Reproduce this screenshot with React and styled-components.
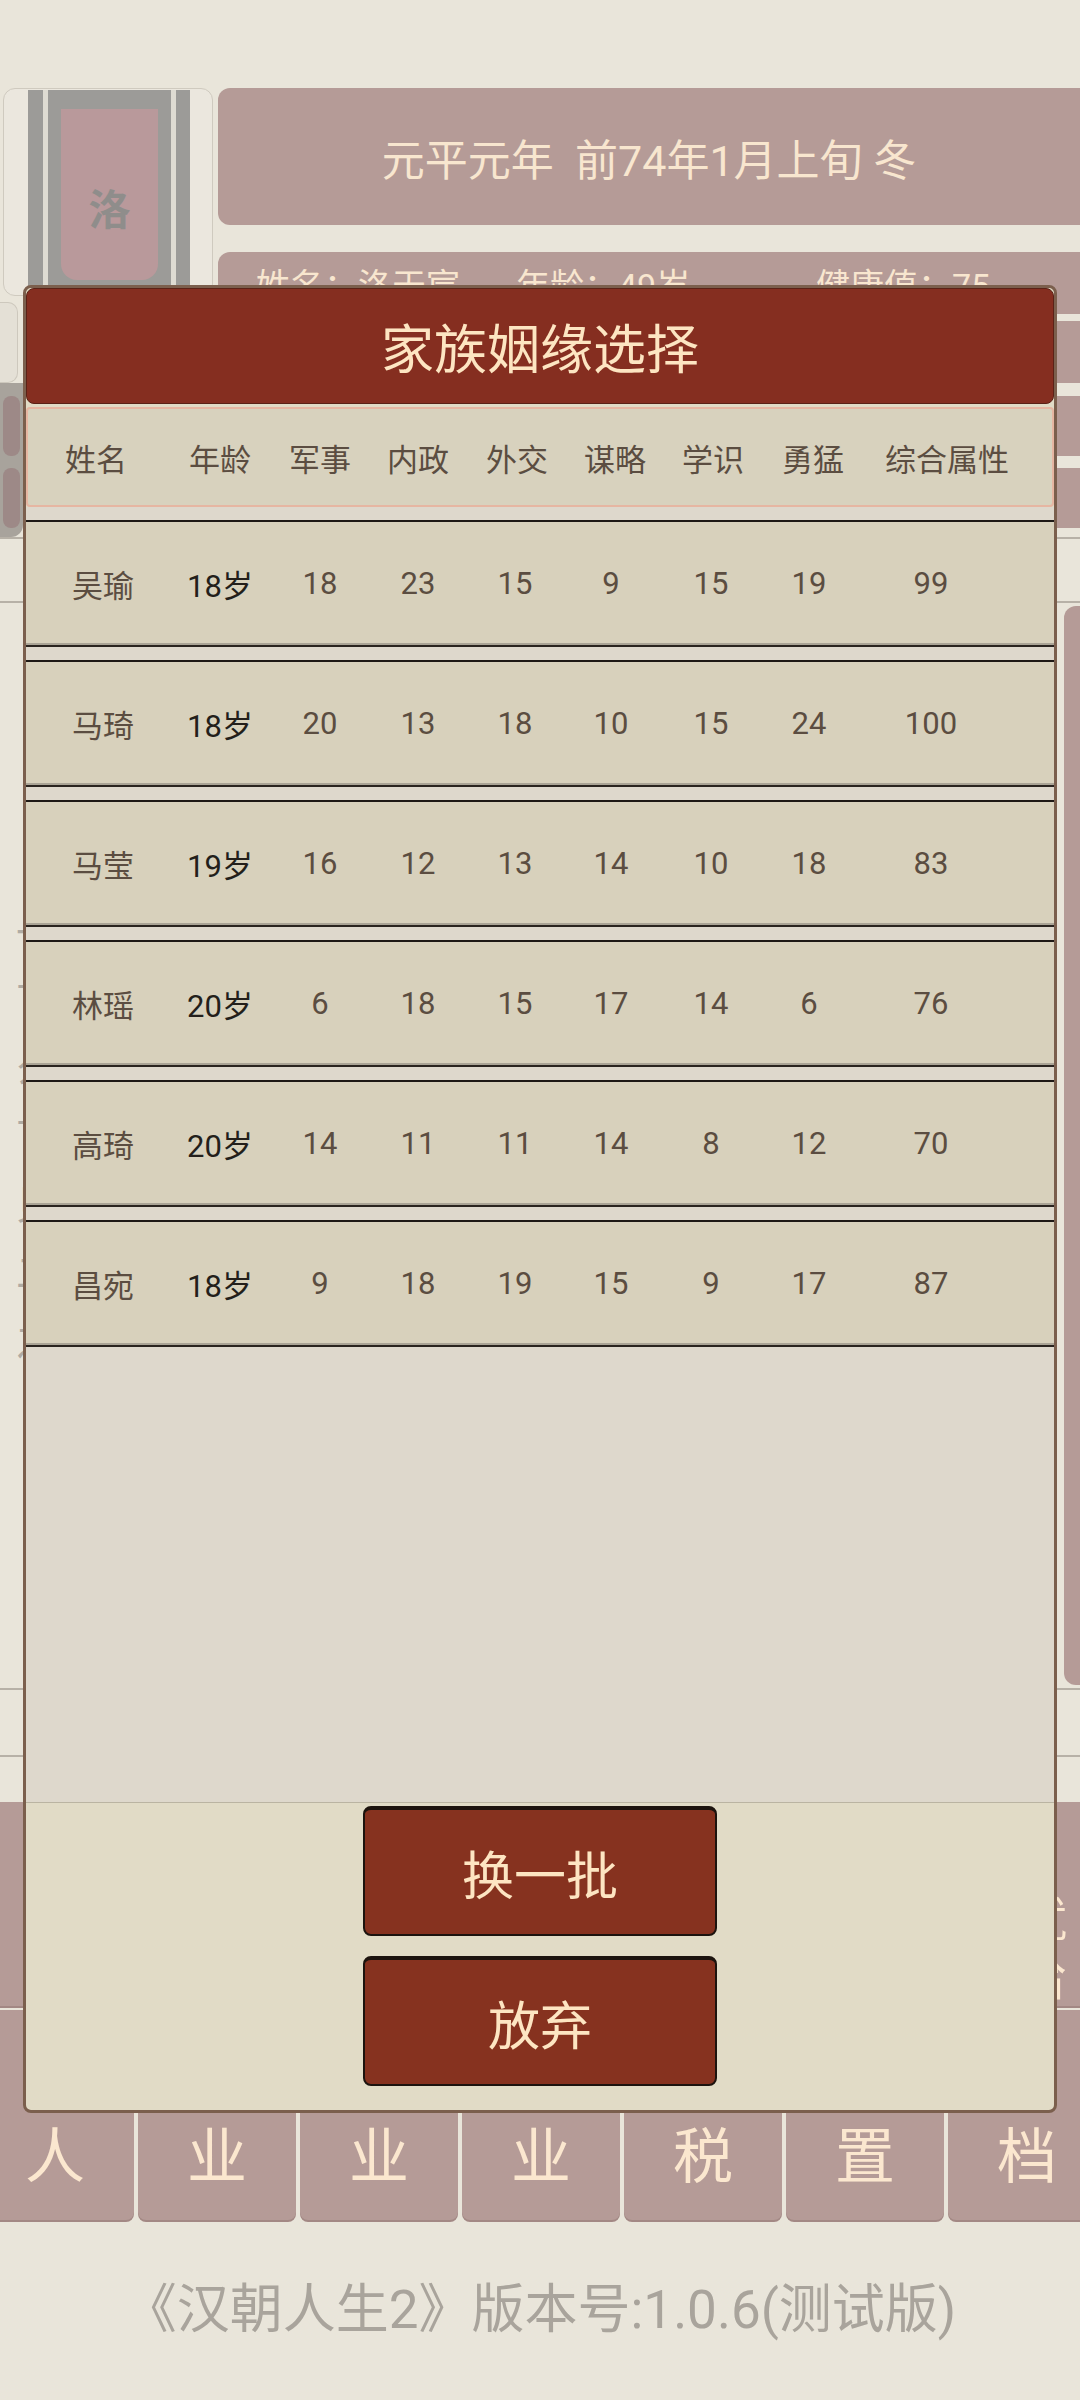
import React from 'react';
import styled, { createGlobalStyle } from 'styled-components';

const GlobalStyle = createGlobalStyle`
  html, body {
    margin: 0;
    padding: 0;
  }
  body {
    background: #e9e5da;
    font-family: Roboto, "Noto Sans CJK SC", sans-serif;
  }
`;

// column centres measured from the screen, turned into grid tracks
// so that each track is centred on its column
const toTemplate = (centers, firstHalf) => {
  let half = firstHalf;
  const widths = [half * 2];
  for (let i = 1; i < centers.length; i++) {
    half = centers[i] - centers[i - 1] - half;
    widths.push(half * 2);
  }
  return {
    offset: centers[0] - firstHalf,
    cols: widths.map(w => `${w}px`).join(' '),
  };
};

const HEAD_COLS = toTemplate([68, 192, 292, 390, 489, 587, 685, 785, 919], 60);
const ROW_COLS = toTemplate([77, 194, 294, 392, 489, 585, 685, 783, 905], 58);

const PINK = '#b59b97';
const CREAM = '#f8e6cf';

const StPage = styled.div`
  position: relative;
  width: 1080px;
  height: 2400px;
  overflow: hidden;
  background: #e9e5da;
`;

/* ---------- background screen ---------- */

const StTopRow = styled.div`
  display: flex;
  align-items: flex-start;
  gap: 5px;
  padding: 88px 0 0 3px;
`;

const StLeftCol = styled.div`
  width: 210px;
  display: flex;
  flex-direction: column;
  gap: 6px;
`;

const StPortraitCard = styled.div`
  height: 208px;
  box-sizing: border-box;
  border: 1px solid #cfcabf;
  border-radius: 12px;
  background: #ebe7de;
  padding: 1px 0 0 24px;
  overflow: hidden;
`;

const StFrame = styled.div`
  width: 162px;
  height: 220px;
  box-sizing: border-box;
  background: #9c9b98;
  padding: 0 14px 0 15px;
`;

const StRails = styled.div`
  height: 100%;
  box-sizing: border-box;
  border-left: 5px solid #dedbd2;
  border-right: 5px solid #dedbd2;
  padding: 19px 13px 0;
`;

const StScroll = styled.div`
  height: 171px;
  background: #b9999b;
  border-radius: 0 0 16px 16px;
  display: flex;
  align-items: center;
  justify-content: center;
  padding-top: 24px;
  box-sizing: border-box;
  font-family: "Noto Sans CJK SC", sans-serif;
  font-size: 42px;
  font-weight: 700;
  color: #8f8d8b;
`;

const StLightTab = styled.div`
  width: 18px;
  height: 81px;
  margin-left: -3px;
  box-sizing: border-box;
  border: 1px solid #cdc8bd;
  border-left: none;
  border-radius: 0 10px 10px 0;
  background: #e4e0d6;
`;

const StRightCol = styled.div`
  flex: 1;
  display: flex;
  flex-direction: column;
`;

const StBanner = styled.div`
  height: 137px;
  background: ${PINK};
  border-radius: 12px 0 0 12px;
  display: flex;
  align-items: center;
  justify-content: center;
  white-space: pre;
  font-size: 43px;
  color: ${CREAM};
`;

const StInfoBar = styled.div`
  margin-top: 27px;
  height: 62px;
  background: ${PINK};
  border-radius: 12px 0 0 12px;
  display: grid;
  grid-template-columns: 260px 300px 1fr;
  align-items: center;
  padding-left: 38px;
  font-size: 34px;
  color: ${CREAM};
`;

const StBar = styled.div`
  margin-top: ${({ $gap }) => $gap}px;
  height: ${({ $h }) => $h}px;
  background: ${PINK};
  border-radius: 12px 0 0 12px;
`;

const StActionSection = styled.div`
  display: flex;
  align-items: flex-start;
`;

const StDock = styled.div`
  width: 23px;
  height: 154px;
  box-sizing: border-box;
  background: #a8a39c;
  border-radius: 0 0 12px 0;
  padding: 13px 3px 0;
  display: flex;
  flex-direction: column;
  gap: 12px;
`;

const StPill = styled.div`
  height: 60px;
  border-radius: 8px;
  background: #9d8987;
`;

const StBars = styled.div`
  flex: 1;
  margin-left: 200px;
  padding-top: 13px;
  display: flex;
  flex-direction: column;
  gap: 12px;

  & > div {
    height: 60px;
    background: ${PINK};
    border-radius: 12px 0 0 12px;
  }
`;

const StStrip = styled.div`
  height: ${({ $h }) => $h}px;
  box-sizing: border-box;
  border-top: 2px solid #b7b1a7;
  border-bottom: 2px solid #b7b1a7;
`;

const StMainArea = styled.div`
  height: 1085px;
  box-sizing: border-box;
  padding-top: 3px;
  display: flex;
  align-items: flex-start;
`;

const StTextPanel = styled.div`
  flex: 1;
  padding: 290px 0 0 16px;
  font-family: "Noto Sans CJK SC", sans-serif;
  font-size: 40px;
  line-height: 68px;
  color: #b0aba3;
`;

const StSidePanel = styled.div`
  width: 16px;
  height: 1079px;
  background: ${PINK};
  border-radius: 12px 0 0 12px;
`;

const StNav = styled.div`
  margin-top: 45px;
  display: flex;
  flex-direction: column;
  gap: 4px;
`;

const StNavRow = styled.div`
  display: flex;
  gap: 4px;
  height: ${({ $h }) => $h}px;
  margin-left: ${({ $shift }) => $shift}px;
`;

const StNavButton = styled.div`
  flex: 0 0 158px;
  box-sizing: border-box;
  background: ${PINK};
  border-radius: 8px;
  box-shadow: 0 2px 0 #a38884;
  display: flex;
  flex-direction: column;
  align-items: center;
  justify-content: center;
  padding-top: ${({ $pad }) => $pad}px;
  font-family: "Noto Sans CJK SC", sans-serif;
  font-size: ${({ $size }) => $size}px;
  line-height: ${({ $lh }) => $lh}px;
  color: #fbe7cf;
`;

const StFooter = styled.div`
  padding-top: 60px;
  text-align: center;
  font-size: 53px;
  line-height: 60px;
  color: #a9a49c;
`;

/* ---------- dialog ---------- */

const StModal = styled.div`
  position: absolute;
  left: 23px;
  top: 285px;
  width: 1034px;
  height: 1828px;
  box-sizing: border-box;
  border: 3px solid #7b5f4d;
  border-radius: 8px;
  background: #e1dbc6;
  display: flex;
  flex-direction: column;
  overflow: hidden;
`;

const StModalTitle = styled.div`
  flex: 0 0 116px;
  box-sizing: border-box;
  background: #852e20;
  border: 1px solid #5a2217;
  border-radius: 8px;
  display: flex;
  align-items: center;
  justify-content: center;
  font-family: "Noto Sans CJK SC", sans-serif;
  font-size: 53px;
  color: #fde5c2;
`;

const StGrid = styled.div`
  display: grid;
  grid-template-columns: ${({ $layout }) => $layout.cols};
  padding-left: ${({ $layout }) => $layout.offset}px;
  align-items: center;
  box-sizing: border-box;
  font-size: 31px;
  color: #5b4d41;

  & > span {
    text-align: center;
    white-space: nowrap;
  }
`;

const StHeadRow = styled(StGrid)`
  flex: 0 0 100px;
  margin-top: 3px;
  background: #d8d2be;
  border: 2px solid #e6b6a2;
  border-radius: 4px;
`;

const StList = styled.div`
  flex: 0 0 1296px;
  box-sizing: border-box;
  background: #ded8cc;
  border-bottom: 1px solid #bab4a2;
  padding-top: 13px;
  display: flex;
  flex-direction: column;
  gap: 13px;
`;

const StRow = styled(StGrid)`
  height: 127px;
  background: #d8d1bc;
  border-top: 2px solid #1e1915;
  border-bottom: 2px solid #2a241f;
  box-shadow: inset 0 -2px 0 #aaa496;
`;

const StAge = styled.span`
  color: #231f1b;
`;

const StButtonArea = styled.div`
  flex: 1;
  padding-top: 3px;
  display: flex;
  flex-direction: column;
  align-items: center;
  gap: 20px;
`;

const StActionButton = styled.button`
  width: 354px;
  height: 130px;
  box-sizing: border-box;
  background: #86321f;
  border: 2px solid #1c130e;
  border-top-width: 4px;
  border-radius: 8px;
  font-family: "Noto Sans CJK SC", sans-serif;
  font-size: 52px;
  color: #fde5c2;
  padding: 0;
  cursor: pointer;
`;

const HEADERS = ['姓名', '年龄', '军事', '内政', '外交', '谋略', '学识', '勇猛', '综合属性'];

const CANDIDATES = [
  { name: '吴瑜', age: 18, stats: [18, 23, 15, 9, 15, 19], total: 99 },
  { name: '马琦', age: 18, stats: [20, 13, 18, 10, 15, 24], total: 100 },
  { name: '马莹', age: 19, stats: [16, 12, 13, 14, 10, 18], total: 83 },
  { name: '林瑶', age: 20, stats: [6, 18, 15, 17, 14, 6], total: 76 },
  { name: '高琦', age: 20, stats: [14, 11, 11, 14, 8, 12], total: 70 },
  { name: '昌宛', age: 18, stats: [9, 18, 19, 15, 9, 17], total: 87 },
];

const TOP_NAV = ['府邸', '仕途', '交友', '门客', '市集', '宗祠', '就拾'];
const BOTTOM_NAV = ['家人', '产业', '商业', '农业', '赋税', '设置', '存档'];

const LOG_LINES = ['一月', '丁口', '么弟', '丁役', '贝币', '二子', '之后'];

const App = () => {
  return (
    <>
      <GlobalStyle />
      <StPage>
        <StTopRow>
          <StLeftCol>
            <StPortraitCard>
              <StFrame>
                <StRails>
                  <StScroll>洛</StScroll>
                </StRails>
              </StFrame>
            </StPortraitCard>
            <StLightTab />
          </StLeftCol>
          <StRightCol>
            <StBanner>元平元年  前74年1月上旬 冬</StBanner>
            <StInfoBar>
              <span>姓名：洛天宸</span>
              <span>年龄：49岁</span>
              <span>健康值：75</span>
            </StInfoBar>
            <StBar $gap={7} $h={62} />
          </StRightCol>
        </StTopRow>

        <StActionSection>
          <StDock>
            <StPill />
            <StPill />
          </StDock>
          <StBars>
            <div />
            <div />
          </StBars>
        </StActionSection>

        <StStrip $h={66} />
        <StMainArea>
          <StTextPanel>
            {LOG_LINES.map(line => (
              <div key={line}>{line}</div>
            ))}
          </StTextPanel>
          <StSidePanel />
        </StMainArea>
        <StStrip $h={69} />

        <StNav>
          <StNavRow $h={204} $shift={-9}>
            {TOP_NAV.map(label => (
              <StNavButton key={label} $pad={80} $size={50} $lh={58}>
                <span>{label[0]}</span>
                <span>{label[1]}</span>
              </StNavButton>
            ))}
          </StNavRow>
          <StNavRow $h={210} $shift={-24}>
            {BOTTOM_NAV.map(label => (
              <StNavButton key={label} $pad={0} $size={60} $lh={74}>
                <span>{label[0]}</span>
                <span>{label[1]}</span>
              </StNavButton>
            ))}
          </StNavRow>
        </StNav>

        <StFooter>《汉朝人生2》版本号:1.0.6(测试版)</StFooter>

        <StModal>
          <StModalTitle>家族姻缘选择</StModalTitle>
          <StHeadRow $layout={HEAD_COLS}>
            {HEADERS.map(h => (
              <span key={h}>{h}</span>
            ))}
          </StHeadRow>
          <StList>
            {CANDIDATES.map(c => (
              <StRow key={c.name} $layout={ROW_COLS}>
                <span>{c.name}</span>
                <StAge>{c.age}岁</StAge>
                {c.stats.map((s, i) => (
                  <span key={i}>{s}</span>
                ))}
                <span>{c.total}</span>
              </StRow>
            ))}
          </StList>
          <StButtonArea>
            <StActionButton>换一批</StActionButton>
            <StActionButton>放弃</StActionButton>
          </StButtonArea>
        </StModal>
      </StPage>
    </>
  );
};

export default App;
